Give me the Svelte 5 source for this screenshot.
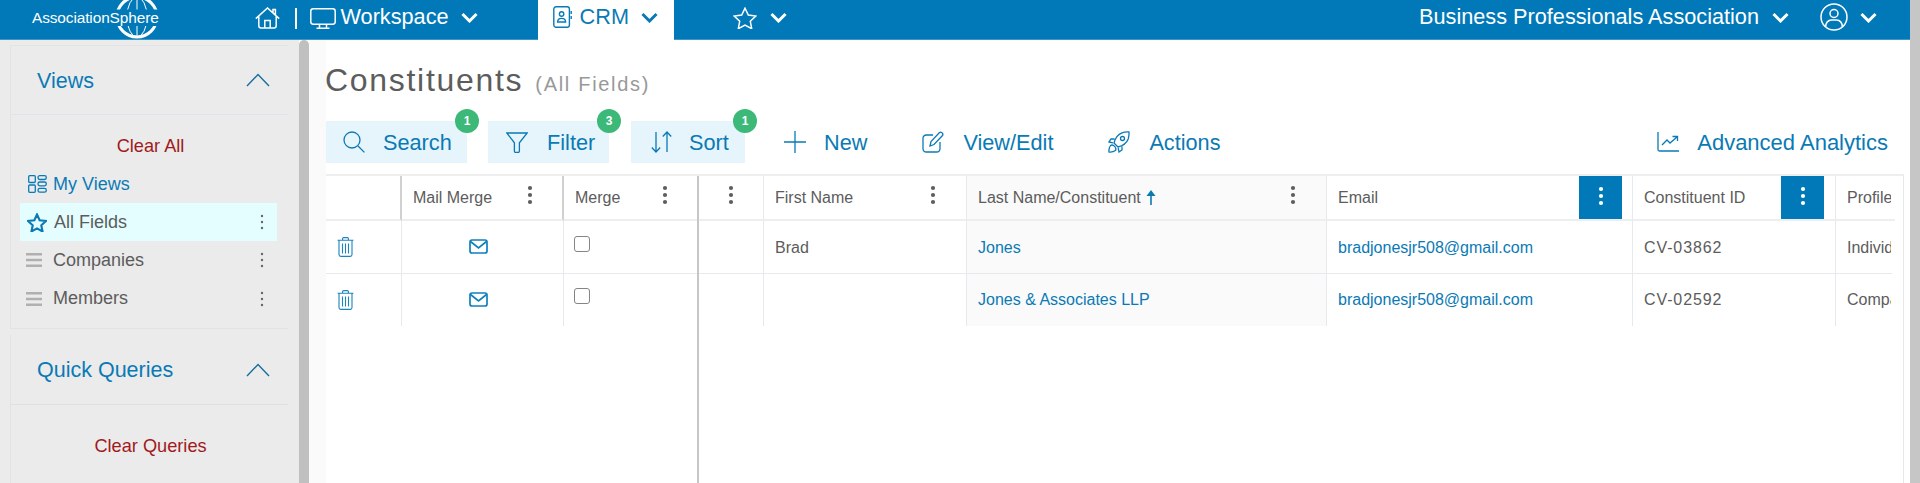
<script>
  const frozenHead = [
    { label: '', dark: true, kebab: false },
    { label: 'Mail Merge', dark: true, kebab: true },
    { label: 'Merge', dark: false, kebab: true }
  ];
  const rows = [
    { first: 'Brad', last: 'Jones', email: 'bradjonesjr508@gmail.com', id: 'CV-03862', profile: 'Individual' },
    { first: '', last: 'Jones & Associates LLP', email: 'bradjonesjr508@gmail.com', id: 'CV-02592', profile: 'Company' }
  ];
</script>

{#snippet kebab(cls = '')}
  <svg class="kebab {cls}" width="6" height="20" viewBox="0 0 6 20" aria-hidden="true"><circle cx="3" cy="3" r="2.1"/><circle cx="3" cy="10" r="2.1"/><circle cx="3" cy="17" r="2.1"/></svg>
{/snippet}
{#snippet minikebab()}
  <svg class="mini" width="4" height="16" viewBox="0 0 4 16" aria-hidden="true"><circle cx="2" cy="2" r="1.2"/><circle cx="2" cy="8" r="1.2"/><circle cx="2" cy="14" r="1.2"/></svg>
{/snippet}
{#snippet chev()}
  <svg class="chev" width="17" height="11" viewBox="0 0 17 11" aria-hidden="true"><path d="M1.500 2l7 7 7-7"/></svg>
{/snippet}
{#snippet chevup()}
  <svg class="chevup" width="24" height="14" viewBox="0 0 24 14" aria-hidden="true"><path d="M1 13L12 1.500 23 13"/></svg>
{/snippet}
{#snippet bars()}
  <svg class="bars" width="16" height="14" viewBox="0 0 16 14" aria-hidden="true"><path d="M0 1.200h16M0 7h16M0 12.800h16"/></svg>
{/snippet}
{#snippet trash()}
  <svg class="line" width="17" height="20" viewBox="0 0 17 20" aria-hidden="true"><path d="M.6 3.200h15.800M5.600 3V1.600q0-1 1-1h3.800q1 0 1 1V3M2 3.200V17.600q0 1.800 1.800 1.800h9.400q1.800 0 1.800-1.800V3.200M5.500 6.500v10M8.500 6.500v10M11.500 6.500v10"/></svg>
{/snippet}
{#snippet mail()}
  <svg class="line thick" width="19" height="15" viewBox="0 0 19 15" aria-hidden="true"><rect x="1" y="1" width="17" height="13" rx="2"/><path d="M1.500 2.500L9.500 8.800l8-6.300"/></svg>
{/snippet}

<div class="app">
  <div class="page">
    <header class="topbar">
      <div class="logo">
        <span class="logotext">AssociationSphere</span>
        <svg class="globe" width="46" height="39" viewBox="0 0 46 39" aria-hidden="true">
          <clipPath id="band"><path d="M0 0h46v9.500H0zM0 26h46v13H0z"/></clipPath>
          <g clip-path="url(#band)" fill="none" stroke="#fff">
            <circle cx="23" cy="17" r="20" stroke-width="3"/>
            <ellipse cx="23" cy="17" rx="10" ry="20" stroke-width="1"/>
            <path d="M23-3v40" stroke-width="1"/>
          </g>
        </svg>
      </div>
      <svg class="topicon home" width="25" height="22" viewBox="0 0 25 22" aria-hidden="true"><path d="M.8 11.600L12.500 1l11.700 10.600M3.800 9.200v9.600q0 2.200 2.200 2.200h13q2.200 0 2.200-2.200V9.200M9.800 21v-7.400h5.400V21M18 5.600V2.400h2.400v5.400"/></svg>
      <span class="sep"></span>
      <svg class="topicon mon" width="26" height="21" viewBox="0 0 26 21" aria-hidden="true"><rect x=".8" y=".8" width="24.400" height="15.400" rx="2.400"/><path d="M9.500 16.400V20M16.500 16.400V20M6.500 20.200h13"/></svg>
      <span class="toplabel work">Workspace</span>
      {@render chev()}
      <div class="crm">
        <svg class="crmicon" width="19" height="22" viewBox="0 0 19 22" aria-hidden="true"><rect x=".8" y=".8" width="15.600" height="20.400" rx="2.200"/><circle cx="8.600" cy="8" r="2.200"/><path d="M4.600 16q0-3.600 4-3.600t4 3.600zM18.200 5v3M18.200 10v3"/></svg>
        <span class="toplabel">CRM</span>
        {@render chev()}
      </div>
      <svg class="topicon star" width="24" height="22" viewBox="0 0 24 22" aria-hidden="true"><path d="M12 1.200l3.300 6.900 7.500 1-5.500 5.200 1.400 7.400L12 18.100l-6.700 3.600 1.400-7.400L1.200 9.100l7.500-1z"/></svg>
      {@render chev()}
      <span class="toplabel org">Business Professionals Association</span>
      {@render chev()}
      <svg class="topicon user" width="28" height="28" viewBox="0 0 28 28" aria-hidden="true"><circle cx="14" cy="14" r="13"/><circle cx="14" cy="10.500" r="4"/><path d="M5.600 24q.4-6.800 6-7h4.800q5.600.2 6 7"/></svg>
      {@render chev()}
    </header>

    <div class="body">
      <aside class="sidebar">
        <section class="panel first">
          <div class="phead"><span>Views</span>{@render chevup()}</div>
          <div class="clear all">Clear All</div>
          <div class="row link">
            <svg class="ic" width="19" height="18" viewBox="0 0 19 18" aria-hidden="true"><rect x=".7" y=".7" width="6.600" height="6.800" rx="1"/><rect x=".7" y="10" width="6.600" height="7.300" rx="1"/><rect x="10" y=".7" width="8.300" height="3.800" rx="1.800"/><rect x="10" y="7" width="8.300" height="3.800" rx="1.800"/><rect x="10" y="13.400" width="8.300" height="3.800" rx="1.800"/></svg>
            <span>My Views</span>
          </div>
          <div class="row active">
            <svg class="ic" width="20" height="19" viewBox="0 0 24 23" aria-hidden="true"><path class="boldstar" d="M12 1.800l3.200 7 7.600.9-5.600 5.200 1.500 7.500L12 18.600l-6.700 3.800 1.500-7.500L1.200 9.700l7.600-.9z"/></svg>
            <span>All Fields</span>
            {@render minikebab()}
          </div>
          <div class="row barred">{@render bars()}<span>Companies</span>{@render minikebab()}</div>
          <div class="row barred">{@render bars()}<span>Members</span>{@render minikebab()}</div>
        </section>
        <section class="panel grow">
          <div class="phead second"><span>Quick Queries</span>{@render chevup()}</div>
          <div class="clear queries">Clear Queries</div>
        </section>
      </aside>
      <div class="sidethumb"></div>
      <div class="strip"></div>

      <main class="main">
        <h1><span class="t1">Constituents</span><span class="t2">(All Fields)</span></h1>

        <div class="toolbar">
          <div class="tool boxed search">
            <svg class="tic" width="22" height="22" viewBox="0 0 22 22" aria-hidden="true"><circle cx="9" cy="9" r="8"/><path d="M15 15l6.400 6.400"/></svg>
            <span class="tl">Search</span><b class="badge">1</b>
          </div>
          <div class="tool boxed filter">
            <svg class="tic" width="22" height="21" viewBox="0 0 22 21" aria-hidden="true"><path d="M.8 1h20.400l-7.800 9.800v8.200q0 1.500-1.500 1.500h-2q-1.500 0-1.500-1.500v-8.200z"/></svg>
            <span class="tl">Filter</span><b class="badge">3</b>
          </div>
          <div class="tool boxed sort">
            <svg class="tic" width="21" height="22" viewBox="0 0 21 22" aria-hidden="true"><path d="M5 1v20M.8 16.500L5 21l4.200-4.500M16 21V1M11.800 5.500L16 1l4.200 4.500"/></svg>
            <span class="tl">Sort</span><b class="badge">1</b>
          </div>
          <div class="tool new">
            <svg class="tic" width="22" height="22" viewBox="0 0 22 22" aria-hidden="true"><path d="M11 0v22M0 11h22"/></svg>
            <span class="tl">New</span>
          </div>
          <div class="tool edit">
            <svg class="tic" width="22" height="22" viewBox="0 0 22 22" aria-hidden="true"><path d="M11 4H4.500Q1 4 1 7.500v10Q1 21 4.500 21h10q3.500 0 3.500-3.500V11M8 15l1-4.500L17.500 1.500q1-.8 2.200 0l.8.8q.8 1.200 0 2.200L12 13.500z"/></svg>
            <span class="tl">View/Edit</span>
          </div>
          <div class="tool actions">
            <svg class="tic" width="22" height="22" viewBox="0 0 22 22" aria-hidden="true"><path d="M8 14L6 12q2-8 8-10.200 3-1 7-.8.200 4-.8 7Q18 14 10 16zM6.500 8H3L1 11l4 .8M14 15.500V19l-3 2-.8-4"/><circle cx="14.500" cy="7.500" r="2"/><path d="M2.500 14.500q-2 3-1.500 6.500 3.500.5 6.500-1.500 1-2-.6-3.900-2.400-2.500-4.400-1.100z"/></svg>
            <span class="tl">Actions</span>
          </div>
          <div class="tool analytics">
            <svg class="tic" width="22" height="20" viewBox="0 0 22 20" aria-hidden="true"><path d="M1 0v17.500q0 1.500 1.500 1.500H22M5 13l5-5 3 3 7-6M15.500 4.500H20.500V9"/></svg>
            <span class="tl">Advanced Analytics</span>
          </div>
        </div>

        <div class="table">
          <div class="frozen">
            {#each frozenHead as c}
              <div class="cell head" class:darkline={c.dark}>
                {#if c.label}<span>{c.label}</span>{/if}
                {#if c.kebab}{@render kebab()}{/if}
              </div>
            {/each}
            {#each rows as r, i}
              <div class="cell" class:last={i === 1}>{@render trash()}</div>
              <div class="cell mailcell" class:last={i === 1}>{@render mail()}</div>
              <div class="cell checkcell" class:last={i === 1}><span class="check"></span></div>
            {/each}
          </div>

          <div class="scroll">
            <div class="cell head actionhead">{@render kebab()}</div>
            <div class="cell head"><span>First Name</span>{@render kebab()}</div>
            <div class="cell head sorted"><span>Last Name/Constituent</span>
              <svg class="arrow" width="10" height="15" viewBox="0 0 10 15" aria-hidden="true"><path d="M5 15V4"/><path class="fillp" d="M5 0l4.500 6H.5z"/></svg>
              {@render kebab()}
            </div>
            <div class="cell head hot"><span>Email</span><div class="kblock">{@render kebab('white')}</div></div>
            <div class="cell head hot idhead"><span>Constituent ID</span><div class="kblock">{@render kebab('white')}</div></div>
            <div class="cell head profile"><span class="clip">Profile Type</span></div>
            {#each rows as r, i}
              <div class="cell" class:last={i === 1}></div>
              <div class="cell" class:last={i === 1} class:top={i === 0}><span>{r.first}</span></div>
              <div class="cell sortedcell" class:last={i === 1} class:top={i === 0}><span class="lnk">{r.last}</span></div>
              <div class="cell" class:last={i === 1} class:top={i === 0}><span class="lnk">{r.email}</span></div>
              <div class="cell" class:last={i === 1} class:top={i === 0}><span class="idt">{r.id}</span></div>
              <div class="cell profilecell" class:last={i === 1} class:top={i === 0}><span class="clip">{r.profile}</span></div>
            {/each}
          </div>
        </div>
      </main>
    </div>
  </div>
  <div class="pagescroll"></div>
</div>

<style>
  :global(body) { margin: 0; background: #fff; }
  .app {
    display: flex; width: 1920px; height: 483px; overflow: hidden;
    font-family: "Liberation Sans", Arial, sans-serif; color: #5c5c5c;
  }
  .page { width: 1910px; display: flex; flex-direction: column; }
  .pagescroll { width: 10px; background: #c6c6c6; }

  /* top bar */
  .topbar {
    height: 39px; flex: none; background: #0179b8; display: flex; align-items: center;
    color: #fff; border-bottom: 1px solid #3d97c6;
  }
  .logo { display: grid; width: 125px; margin-left: 32px; height: 39px; align-items: center; }
  .logo > * { grid-area: 1 / 1; }
  .logotext { font-size: 15.4px; line-height: 39px; margin-top: -5px; white-space: nowrap; letter-spacing: -.1px; }
  .globe { justify-self: end; margin-right: -1px; }
  .topicon { fill: none; stroke: #fff; stroke-width: 1.5; flex: none; }
  .home { margin-left: 98px; margin-bottom: 4px; }
  .sep { width: 1.5px; height: 21px; background: #fff; margin: 0 13px 2px 15px; }
  .mon { margin-bottom: 3px; }
  .toplabel { font-size: 21.700px; line-height: 34px; margin-bottom: 5px; white-space: nowrap; }
  .work { margin-left: 5px; }
  .chev { fill: none; stroke: #fff; stroke-width: 3; flex: none; margin-bottom: 4px; }
  .work + :global(.chev) { margin-left: 12px; }
  .crm {
    width: 136px; height: 40px; margin: 0 0 -1px 60px; background: #fff; color: #0a7ab5;
    display: flex; align-items: center; box-sizing: border-box; padding-left: 15px;
  }
  .crmicon { fill: none; stroke: #0a7ab5; stroke-width: 1.4; margin-bottom: 6px; }
  .crm .toplabel { margin-left: 8px; margin-bottom: 6px; }
  .crm :global(.chev) { stroke: #0a7ab5; margin-left: 12px; margin-bottom: 6px; }
  .star { margin-left: 59px; margin-bottom: 4px; }
  .star + :global(.chev) { margin-left: 13px; }
  .org { margin-left: auto; }
  .org + :global(.chev) { margin-left: 13px; }
  .user { margin: 0 12px 6px 31px; }
  .user + :global(.chev) { margin-right: 33px; }

  .body { flex: 1; display: flex; min-height: 0; }

  /* sidebar */
  .sidebar {
    width: 299px; flex: none; background: #ebebeb; box-sizing: border-box; padding: 5px 11px 0 10px;
    display: flex; flex-direction: column;
  }
  .sidethumb { width: 10px; flex: none; background: #c0c0c0; border-radius: 5px 5px 0 0; }
  .strip { width: 17px; flex: none; background: #fafafa; }
  .panel { border-left: 1px solid #e3e3e3; }
  .grow { flex: 1; }
  .panel.first { border-top: 1px solid #e3e3e3; border-bottom: 1px solid #e3e3e3; height: 284px; box-sizing: border-box; margin-bottom: 6px; flex: none; }
  .phead {
    height: 69px; box-sizing: border-box; display: flex; align-items: center; justify-content: space-between;
    padding: 0 18px 0 26px; border-bottom: 1px solid #dfe3ea; font-size: 21.500px; color: #0a7ab5;
  }
  .phead > span { margin-top: 2px; }
  .phead.second { height: 70px; border-bottom-color: #e0e0e0; }
  .chevup { fill: none; stroke: #156f9f; stroke-width: 1.4; }
  .clear { text-align: center; font-size: 18.200px; color: #a01a20; line-height: 38px; padding-left: 2px; }
  .all { padding-top: 12px; }
  .queries { padding-top: 22px; }
  .row {
    height: 38.200px; margin: 0 11px 0 9px; display: flex; align-items: center; font-size: 18px;
    box-sizing: border-box; padding: 0 13px 0 7px;
  }
  .row > span { margin-left: 7px; flex: 1; }
  .row.link { color: #0a7ab5; padding-left: 8px; }
  .row.link > span { margin-left: 6px; }
  .row.active { background: #e4feff; }
  .row.barred { padding-left: 6px; }
  .ic { fill: none; stroke: #0a7ab5; stroke-width: 1.3; flex: none; }
  .boldstar { stroke-width: 2.6; }
  .bars { fill: none; stroke: #b0b0b0; stroke-width: 2.4; flex: none; margin-right: 4px; }
  .mini { fill: #666; flex: none; }

  /* main */
  .main { flex: 1; min-width: 0; background: #fff; display: flex; flex-direction: column; padding-right: 6px; }
  h1 { margin: 20px 0 0; height: 40px; display: flex; align-items: baseline; font-weight: normal; line-height: 40px; }
  .t1 { font-size: 32px; letter-spacing: 1.700px; color: #5c5c5c; margin-left: -1px; }
  .t2 { font-size: 20px; letter-spacing: 1.700px; color: #999; margin-left: 12px; }

  .toolbar { display: flex; height: 42px; margin-top: 21px; font-size: 21.700px; color: #0a7ab5; align-items: center; }
  .tool { display: flex; align-items: center; height: 42px; position: relative; flex: none; }
  .tl { margin-top: 2px; }
  .tic { fill: none; stroke: #0a7ab5; stroke-width: 1.3; flex: none; }
  .boxed { background: #e6f4fb; box-sizing: border-box; }
  .search { width: 141px; padding-left: 17px; gap: 18px; }
  .filter { width: 121px; margin-left: 21px; padding-left: 18px; gap: 19px; }
  .sort { width: 114px; margin-left: 22px; padding-left: 20px; gap: 17px; }
  .new { margin-left: 39px; gap: 18px; }
  .edit { margin-left: 55px; gap: 19px; }
  .actions { margin-left: 55px; gap: 19px; }
  .analytics { margin-left: auto; margin-right: 16px; gap: 18px; font-size: 22px; }
  .badge {
    position: absolute; right: -12px; top: -12px; width: 24px; height: 24px; border-radius: 50%;
    background: #3cb878; color: #fff; font-size: 12px; line-height: 24px; text-align: center;
  }

  /* table */
  .table {
    flex: 1; display: flex; min-height: 0; margin-top: 11px;
    border-top: 2px solid #eeeeee; border-right: 1px solid #e8e8e8; font-size: 16px;
  }
  .frozen {
    display: grid; grid-template-columns: 76px 162px 133px; grid-template-rows: 45px 53px 52px;
    align-content: start; border-right: 2px solid #c6c6c6; flex: none; width: 371px;
  }
  .scroll {
    display: grid; grid-template-columns: 65px 203px 360px 306px 203px 59px; grid-template-rows: 45px 53px 52px;
    align-content: start; flex: none;
  }
  .cell {
    display: flex; align-items: center; box-sizing: border-box; padding: 0 11px;
    border-right: 1px solid #e8e9ed; border-bottom: 1px solid #e8e9ed; min-width: 0; white-space: nowrap;
  }
  .cell.last { border-bottom: 0; }
  .cell.top { padding-top: 2px; }
  .head { justify-content: space-between; border-bottom: 2px solid #eceef0; }
  .head.darkline { border-right: 2px solid #d0d0d0; }
  .frozen .cell:nth-child(3n) { border-right: 0; }
  .kebab { fill: #5e5e5e; flex: none; margin-bottom: 6px; margin-right: 19px; }
  .frozen .kebab { margin-right: 18px; }
  .kebab.white { fill: #fff; margin: 0 0 4px; }
  .actionhead { justify-content: center; padding: 0; }
  .actionhead .kebab { margin-right: 0; margin-left: -1px; }
  .sorted { background: #fafafa; justify-content: flex-start; }
  .sorted .kebab { margin-left: auto; margin-right: 19px; }
  .sortedcell { background: #fafafa; }
  .arrow { margin-left: 5px; stroke: #0a7ab5; stroke-width: 1.6; fill: none; margin-bottom: 1px; }
  .fillp { fill: #0a7ab5; stroke: none; }
  .hot { padding-right: 10px; align-items: stretch; }
  .hot > span { align-self: center; }
  .idhead { padding-right: 11px; }
  .kblock { width: 43px; background: #0179b8; display: flex; align-items: center; justify-content: center; }
  .profile { border-right: 0; justify-content: flex-start; padding-right: 0; }
  .profilecell { border-right: 0; padding-right: 0; width: 56px; }
  .clip { display: block; width: 44px; overflow: hidden; }
  .lnk { color: #0a7ab5; }
  .idt { letter-spacing: .9px; }
  .mailcell { justify-content: center; padding: 0 9px 2px 0; }
  .checkcell { align-items: flex-start; padding: 15px 0 0 10px; }
  .checkcell.last { padding-top: 14px; }
  .check { width: 16px; height: 16px; box-sizing: border-box; border: 1.5px solid #858585; border-radius: 3px; background: #fff; }
  .line { fill: none; stroke: #1b84bd; stroke-width: 1.100; }
  .thick { stroke: #0f80bc; stroke-width: 1.700; }
</style>
